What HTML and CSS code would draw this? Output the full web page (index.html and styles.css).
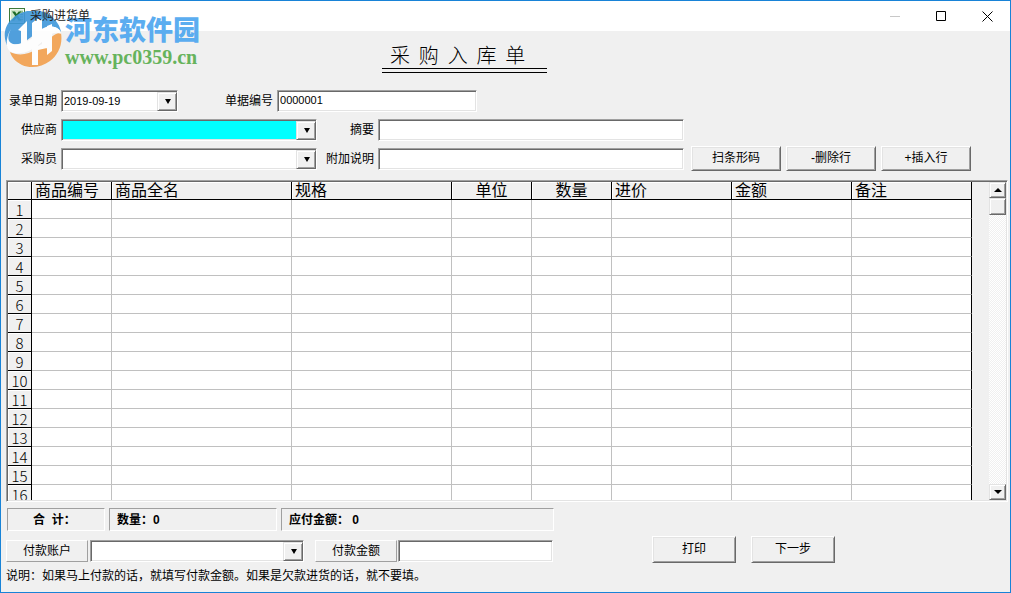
FILE: index.html
```html
<!DOCTYPE html>
<html lang="zh-CN">
<head>
<meta charset="utf-8">
<title>采购进货单</title>
<link rel="stylesheet" href="styles.css">
</head>
<body>
<div class="window">
  <header class="titlebar">
    <svg class="app-icon" width="16" height="16" viewBox="0 0 16 16" aria-hidden="true">
      <rect x="0.5" y="0.5" width="15" height="15" fill="#f4faf2" stroke="#3d7a3a"/>
      <rect x="2" y="2" width="12" height="12" fill="#cfe6c8"/>
      <path d="M11 4h3M11 6.500h3M11 9h3M11 11.500h3" stroke="#5b9a55"/>
      <path d="M3 3.500h3l1.700 2.600L9.700 3.500h2.500L9 7.800l3.500 4.700h-3L7.500 9.700l-2.200 2.800H2.800L6.200 8z" fill="#1f6b2a"/>
    </svg>
    <h1 class="caption">采购进货单</h1>
    <button class="sys" type="button" aria-label="最小化" disabled>
      <svg width="11" height="11" viewBox="0 0 11 11"><path d="M0 5.500h10" stroke="#c8c8c8"/></svg>
    </button>
    <button class="sys" type="button" aria-label="最大化">
      <svg width="11" height="11" viewBox="0 0 11 11"><path d="M0.500 0.500h9v9h-9z" fill="none" stroke="#000"/></svg>
    </button>
    <button class="sys" type="button" aria-label="关闭">
      <svg width="11" height="11" viewBox="0 0 11 11"><path d="M0.500 0.500l10 10M10.500 0.500l-10 10" stroke="#000"/></svg>
    </button>
  </header>

  <div class="watermark">
    <svg width="58" height="58" viewBox="0 0 58 58" aria-hidden="true">
      <path d="M5 38C-2 27 0 15 8 8 19-3 37-3 47 5c6 5 9 10 10 16-3-5-9-7-15-5-8 3-13 9-20 14-7 4-14 5-18 1-1 2 0 5 1 7z" fill="#3f97da"/>
      <path d="M57 22c2 12-3 22-11 28-8 6-19 8-28 4-6-3-10-7-12-13 8 4 18 3 27-3 8-5 13-12 19-15 2-1 4-1 5-1z" fill="#f3a04c"/>
      <path d="M8 17C3 24 3 31 9 33c6 1 12-1 18-5 7-5 12-11 19-12 6-1 10 2 11 7-6-3-11 0-16 5-7 7-15 13-24 14-7 1-13-1-14-7-1-6 1-13 5-18z" fill="#fff"/>
      <path d="M14 19l9-9v23l-6 2V20zM28 12l5-4v22l-5 3zM33 8h5v14l-5 4zM28 33h6v21h-6zM38 22l5-2v17l-9 2v-4l4-2zM43 15l5-2v27l-5 4z" fill="#fff"/>
    </svg>
    <div class="watermark-text">
      <span class="site-name">河东软件园</span>
      <span class="site-url">www.pc0359.cn</span>
    </div>
  </div>

  <main class="content">
    <h2 class="doc-title">采&nbsp; 购&nbsp; 入&nbsp; 库&nbsp; 单</h2>

    <form class="form">
      <div class="row">
        <label class="lead" for="date">录单日期</label>
        <div class="combo combo-date"><select id="date"><option>2019-09-19</option></select></div>
        <label class="number-label" for="number">单据编号</label>
        <input class="edit number" id="number" type="text" value="0000001">
      </div>
      <div class="row">
        <label class="lead" for="supplier">供应商</label>
        <div class="combo combo-wide required"><select id="supplier"><option></option></select></div>
        <label class="second" for="summary">摘要</label>
        <input class="edit long" id="summary" type="text">
      </div>
      <div class="row">
        <label class="lead" for="buyer">采购员</label>
        <div class="combo combo-wide"><select id="buyer"><option></option></select></div>
        <label class="second" for="extra">附加说明</label>
        <input class="edit long" id="extra" type="text">
        <div class="row-actions">
          <button class="push" type="button">扫条形码</button>
          <button class="push" type="button">-删除行</button>
          <button class="push" type="button">+插入行</button>
        </div>
      </div>
    </form>

    <section class="grid-frame">
      <div class="grid-view">
        <table class="grid">
          <colgroup>
            <col class="c-index"><col class="c-small"><col class="c-name"><col class="c-spec"><col class="c-small"><col class="c-small"><col class="c-mid"><col class="c-mid"><col class="c-mid">
          </colgroup>
          <thead>
            <tr><th></th><th>商品编号</th><th>商品全名</th><th>规格</th><th class="center">单位</th><th class="center">数量</th><th>进价</th><th>金额</th><th>备注</th></tr>
          </thead>
          <tbody>
            <tr><th>1</th><td></td><td></td><td></td><td></td><td></td><td></td><td></td><td></td></tr>
            <tr><th>2</th><td></td><td></td><td></td><td></td><td></td><td></td><td></td><td></td></tr>
            <tr><th>3</th><td></td><td></td><td></td><td></td><td></td><td></td><td></td><td></td></tr>
            <tr><th>4</th><td></td><td></td><td></td><td></td><td></td><td></td><td></td><td></td></tr>
            <tr><th>5</th><td></td><td></td><td></td><td></td><td></td><td></td><td></td><td></td></tr>
            <tr><th>6</th><td></td><td></td><td></td><td></td><td></td><td></td><td></td><td></td></tr>
            <tr><th>7</th><td></td><td></td><td></td><td></td><td></td><td></td><td></td><td></td></tr>
            <tr><th>8</th><td></td><td></td><td></td><td></td><td></td><td></td><td></td><td></td></tr>
            <tr><th>9</th><td></td><td></td><td></td><td></td><td></td><td></td><td></td><td></td></tr>
            <tr><th>10</th><td></td><td></td><td></td><td></td><td></td><td></td><td></td><td></td></tr>
            <tr><th>11</th><td></td><td></td><td></td><td></td><td></td><td></td><td></td><td></td></tr>
            <tr><th>12</th><td></td><td></td><td></td><td></td><td></td><td></td><td></td><td></td></tr>
            <tr><th>13</th><td></td><td></td><td></td><td></td><td></td><td></td><td></td><td></td></tr>
            <tr><th>14</th><td></td><td></td><td></td><td></td><td></td><td></td><td></td><td></td></tr>
            <tr><th>15</th><td></td><td></td><td></td><td></td><td></td><td></td><td></td><td></td></tr>
            <tr><th>16</th><td></td><td></td><td></td><td></td><td></td><td></td><td></td><td></td></tr>
          </tbody>
        </table>
      </div>
      <div class="scrollbar">
        <button class="scroll-part" type="button" aria-label="向上滚动"><svg width="8" height="4" viewBox="0 0 8 4"><path d="M0 4l4-4 4 4z"/></svg></button>
        <div class="scroll-part thumb"></div>
        <button class="scroll-part scroll-down" type="button" aria-label="向下滚动"><svg width="8" height="4" viewBox="0 0 8 4"><path d="M0 0l4 4 4-4z"/></svg></button>
      </div>
    </section>

    <div class="totals">
      <div class="panel panel-sum">合&nbsp; 计：</div>
      <div class="panel panel-count">数量：0</div>
      <div class="panel panel-due">应付金额：&nbsp;0</div>
    </div>

    <div class="payment">
      <label class="raised" for="account">付款账户</label>
      <div class="combo combo-account"><select id="account"><option></option></select></div>
      <label class="raised raised-second" for="amount">付款金额</label>
      <input class="edit amount" id="amount" type="text">
      <div class="payment-actions">
        <button class="push push-large" type="button">打印</button>
        <button class="push push-large" type="button">下一步</button>
      </div>
    </div>

    <p class="note">说明：如果马上付款的话，就填写付款金额。如果是欠款进货的话，就不要填。</p>
  </main>
</div>
</body>
</html>
```
FILE: styles.css
```css
* {
  box-sizing: border-box;
}

body {
  margin: 0;
  background: #fff;
  color: #000;
  font: 12px/16px "Liberation Sans", "Noto Sans CJK SC", sans-serif;
}

button,
input,
select {
  font: inherit;
  color: inherit;
  border-radius: 0;
}

.window {
  position: relative;
  display: flex;
  flex-direction: column;
  height: 100vh;
  border: 1px solid #1883d7;
  background: #f0f0f0;
}

/* Title bar */
.titlebar {
  display: flex;
  align-items: center;
  height: 30px;
  padding-left: 8px;
  background: #fff;
}

.app-icon {
  flex: none;
}

.caption {
  position: relative;
  z-index: 2;
  flex: 1;
  margin: 0 0 0 5px;
  color: #222;
  font-size: 12px;
  font-weight: 400;
}

.sys {
  display: grid;
  place-items: center;
  width: 46px;
  height: 30px;
  padding: 0;
  border: 0;
  background: none;
}

/* Site mark laid over the top left corner */
.watermark {
  position: absolute;
  top: 10px;
  left: 3px;
  display: flex;
  gap: 3px;
  pointer-events: none;
  opacity: 0.9;
}

.watermark-text {
  display: flex;
  flex-direction: column;
}

.site-name {
  color: #4aa5ef;
  font: 900 27px/36px "Noto Sans CJK SC", sans-serif;
}

.site-url {
  color: #58ad4c;
  font: 700 20px/20px "Liberation Serif", serif;
}

.content {
  display: flex;
  flex: 1;
  flex-direction: column;
  min-height: 0;
  padding: 11px 2px 8px 5px;
}

.doc-title {
  align-self: flex-start;
  margin: 0 0 0 376px;
  padding: 0 22px 0 8px;
  border-bottom: 1px solid #000;
  font: 300 20px/26px "Noto Sans CJK SC", sans-serif;
}

.doc-title::after {
  content: "";
  display: block;
  height: 3px;
  margin: 0 -22px 0 -8px;
  border-top: 1px solid #000;
}

/* Entry form */
.form {
  display: flex;
  flex-direction: column;
  gap: 6px;
  margin-top: 16px;
}

.row {
  display: flex;
  align-items: center;
  height: 23px;
}

.lead {
  width: 51px;
  margin-right: 4px;
  text-align: right;
}

.second {
  width: 57px;
  margin-right: 4px;
  text-align: right;
}

.number-label {
  margin: 0 4px 0 47px;
}

.edit,
.combo {
  height: 22px;
  border: 1px solid;
  border-color: #a0a0a0 #fff #fff #a0a0a0;
  box-shadow: inset 1px 1px #696969, inset -1px -1px #e3e3e3;
  background: #fff;
  font-size: 11px;
}

.edit {
  padding: 0 2px 2px;
  outline: 0;
}

.combo {
  position: relative;
  padding: 1px 0 1px 1px;
}

.combo select {
  display: block;
  width: 100%;
  height: 100%;
  padding: 0 18px 0 1px;
  border: 0;
  outline: 0;
  appearance: none;
  background: transparent;
}

.combo::before {
  content: "";
  position: absolute;
  top: 1px;
  right: 0;
  bottom: 0;
  width: 18px;
  border: 1px solid;
  border-color: #e3e3e3 #696969 #696969 #e3e3e3;
  box-shadow: inset 1px 1px #fff, inset -1px -1px #a0a0a0;
  background: #f0f0f0;
  pointer-events: none;
}

.combo::after {
  content: "";
  position: absolute;
  top: 8px;
  right: 6px;
  border: 3px solid transparent;
  border-top: 5px solid #000;
  border-bottom: 0;
  pointer-events: none;
}

.combo-date {
  width: 117px;
}

.combo-wide {
  width: 256px;
}

.required select {
  background: #0ff;
}

.number {
  width: 200px;
}

.long {
  width: 306px;
}

.row-actions {
  display: flex;
  gap: 5px;
  margin-left: 7px;
}

.push {
  width: 90px;
  height: 25px;
  padding: 0 0 1px;
  border: 1px solid;
  border-color: #fff #696969 #696969 #fff;
  box-shadow: inset 1px 1px #e3e3e3, inset -1px -1px #a0a0a0;
  background: #f0f0f0;
}

/* Goods grid */
.grid-frame {
  display: flex;
  flex: 1;
  gap: 17px;
  min-height: 0;
  margin-top: 10px;
  padding: 1px;
  border: 1px solid;
  border-color: #a0a0a0 #fff #fff #a0a0a0;
  box-shadow: inset 1px 1px #696969, inset -1px -1px #e3e3e3;
}

.grid-view {
  flex: 1;
  overflow: hidden;
}

.grid {
  width: 100%;
  table-layout: fixed;
  border-spacing: 0;
  font-size: 16px;
  line-height: 17px;
}

.c-index {
  width: 24px;
}

.c-small {
  width: 80px;
}

.c-name {
  width: 180px;
}

.c-spec {
  width: 160px;
}

.c-mid {
  width: 120px;
}

.grid th,
.grid td {
  height: 19px;
  padding: 0;
  border: solid #c0c0c0;
  border-width: 0 1px 1px 0;
  background: #fff;
}

.grid th {
  border-color: #000;
  box-shadow: inset 1px 1px #fff;
  background: #f0f0f0;
  font-weight: 400;
}

.grid thead th {
  height: 18px;
  padding-left: 3px;
  text-align: left;
}

.grid thead .center {
  padding: 0;
  text-align: center;
}

.grid tbody th {
  font-family: "Noto Sans CJK SC", sans-serif;
  font-size: 15px;
  font-weight: 300;
}

.grid td:last-child {
  border-right-color: #000;
}

.scrollbar {
  display: flex;
  flex-direction: column;
  width: 17px;
  background: repeating-conic-gradient(#fff 0 25%, #f0f0f0 0 50%) 0 0 / 2px 2px;
}

.scroll-part {
  display: grid;
  place-items: center;
  width: 17px;
  height: 16px;
  padding: 0;
  border: 1px solid;
  border-color: #e3e3e3 #696969 #696969 #e3e3e3;
  box-shadow: inset 1px 1px #fff, inset -1px -1px #a0a0a0;
  background: #f0f0f0;
}

.thumb {
  height: 17px;
}

.scroll-down {
  margin-top: auto;
}

/* Totals and payment */
.totals {
  display: flex;
  gap: 4px;
  margin: 6px 0 4px 1px;
}

.panel {
  height: 23px;
  padding-left: 7px;
  border: 1px solid;
  border-color: #a0a0a0 #fff #fff #a0a0a0;
  font-weight: 700;
  line-height: 22px;
}

.panel-sum {
  width: 98px;
  padding-left: 25px;
}

.panel-count {
  width: 168px;
}

.panel-due {
  width: 273px;
}

.payment {
  display: flex;
  align-items: center;
  height: 29px;
}

.payment .combo,
.payment .edit {
  margin-top: 2px;
}

.raised {
  width: 82px;
  height: 22px;
  margin: 2px 2px 0 0;
  border: 1px solid;
  border-color: #fff #a0a0a0 #a0a0a0 #fff;
  text-align: center;
  line-height: 20px;
}

.raised-second {
  margin: 2px 1px 0 11px;
}

.combo-account {
  width: 214px;
}

.amount {
  width: 155px;
}

.payment-actions {
  display: flex;
  gap: 15px;
  margin-left: 99px;
}

.push-large {
  width: 84px;
  height: 27px;
}

.note {
  margin: 4px 0 0;
}
```
